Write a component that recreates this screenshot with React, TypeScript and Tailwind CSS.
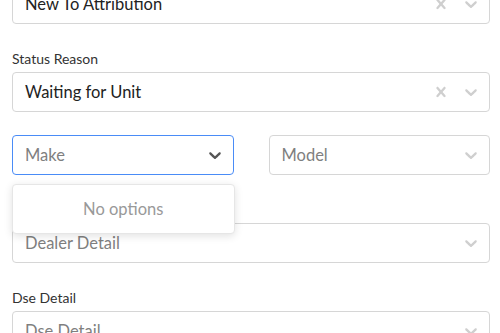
import React from "react";

const Chevron = ({ dark }: { dark?: boolean }) => (
  <svg viewBox="0 0 20 20" width="20" height="20" className={dark ? "fill-[#555]" : "fill-[#cfcfcf]"}>
    <path d="M4.516 7.548c0.436-0.446 1.043-0.481 1.576 0l3.908 3.747 3.908-3.747c0.533-0.481 1.141-0.446 1.574 0 0.436 0.445 0.408 1.197 0 1.615-0.406 0.418-4.695 4.502-4.695 4.502-0.217 0.223-0.502 0.335-0.787 0.335s-0.57-0.112-0.789-0.335c0 0-4.287-4.084-4.695-4.502s-0.436-1.17 0-1.615z" />
  </svg>
);

const Cross = () => (
  <svg viewBox="0 0 20 20" width="20" height="20" className="fill-[#cfcfcf]">
    <path d="M14.348 14.849c-0.469 0.469-1.229 0.469-1.697 0l-2.651-3.030-2.651 3.029c-0.469 0.469-1.229 0.469-1.697 0-0.469-0.469-0.469-1.229 0-1.697l2.758-3.15-2.759-3.152c-0.469-0.469-0.469-1.228 0-1.697s1.228-0.469 1.697 0l2.652 3.031 2.651-3.031c0.469-0.469 1.228-0.469 1.697 0s0.469 1.229 0 1.697l-2.758 3.152 2.758 3.15c0.469 0.469 0.469 1.229 0 1.698z" />
  </svg>
);

// Select box like react-select
const Select = ({
  value,
  placeholder,
  clearable,
  focused,
  children,
}: {
  value?: string;
  placeholder?: string;
  clearable?: boolean;
  focused?: boolean;
  children?: React.ReactNode;
}) => (
  <div className="relative">
    <div
      className={`h-10 flex items-center rounded-[4px] border bg-white ${
        focused ? "border-[#4a8cf7]" : "border-[#d6d6d6]"
      }`}
    >
      <div className="flex-1 pl-3 text-[16.5px] truncate">
        {value ? (
          <span className="text-[#222]">{value}</span>
        ) : (
          <span className="text-[#7f7f7f]">{placeholder}</span>
        )}
      </div>
      <div className="flex items-center">
        {clearable && (
          <div className="p-2 pr-[2px]">
            <Cross />
          </div>
        )}
        <div className="p-2">
          <Chevron dark={focused} />
        </div>
      </div>
    </div>
    {children}
  </div>
);

const Field = ({ label, children }: { label?: string; children: React.ReactNode }) => (
  <div className="mb-[26px]">
    {label && <div className="h-[18px] mb-1 text-[14px] leading-[18px] text-[#333]">{label}</div>}
    {children}
  </div>
);

export default function App() {
  return (
    <div className="w-[500px] h-[333px] overflow-hidden bg-white font-['Lato',sans-serif]">
      <div className="-mt-4 px-3 pr-[10px]">
        <Field>
          <Select value="New To Attribution" clearable />
        </Field>
        <Field label="Status Reason">
          <Select value="Waiting for Unit" clearable />
        </Field>
        <div className="grid grid-cols-2 gap-[35px] mb-[26px] mt-[-3px]">
          <Select placeholder="Make" focused>
            <div className="absolute z-10 left-0 right-[-1px] top-[49px] h-[50px] rounded-[4px] bg-white border border-[#e6e6e6] shadow-[0_2px_8px_rgba(0,0,0,0.12)] flex items-center justify-center text-[16.5px] text-[#999]">
              No options
            </div>
          </Select>
          <Select placeholder="Model" />
        </div>
        <Field label="Dealer Detail">
          <Select placeholder="Dealer Detail" />
        </Field>
        <Field label="Dse Detail">
          <Select placeholder="Dse Detail" />
        </Field>
      </div>
    </div>
  );
}
